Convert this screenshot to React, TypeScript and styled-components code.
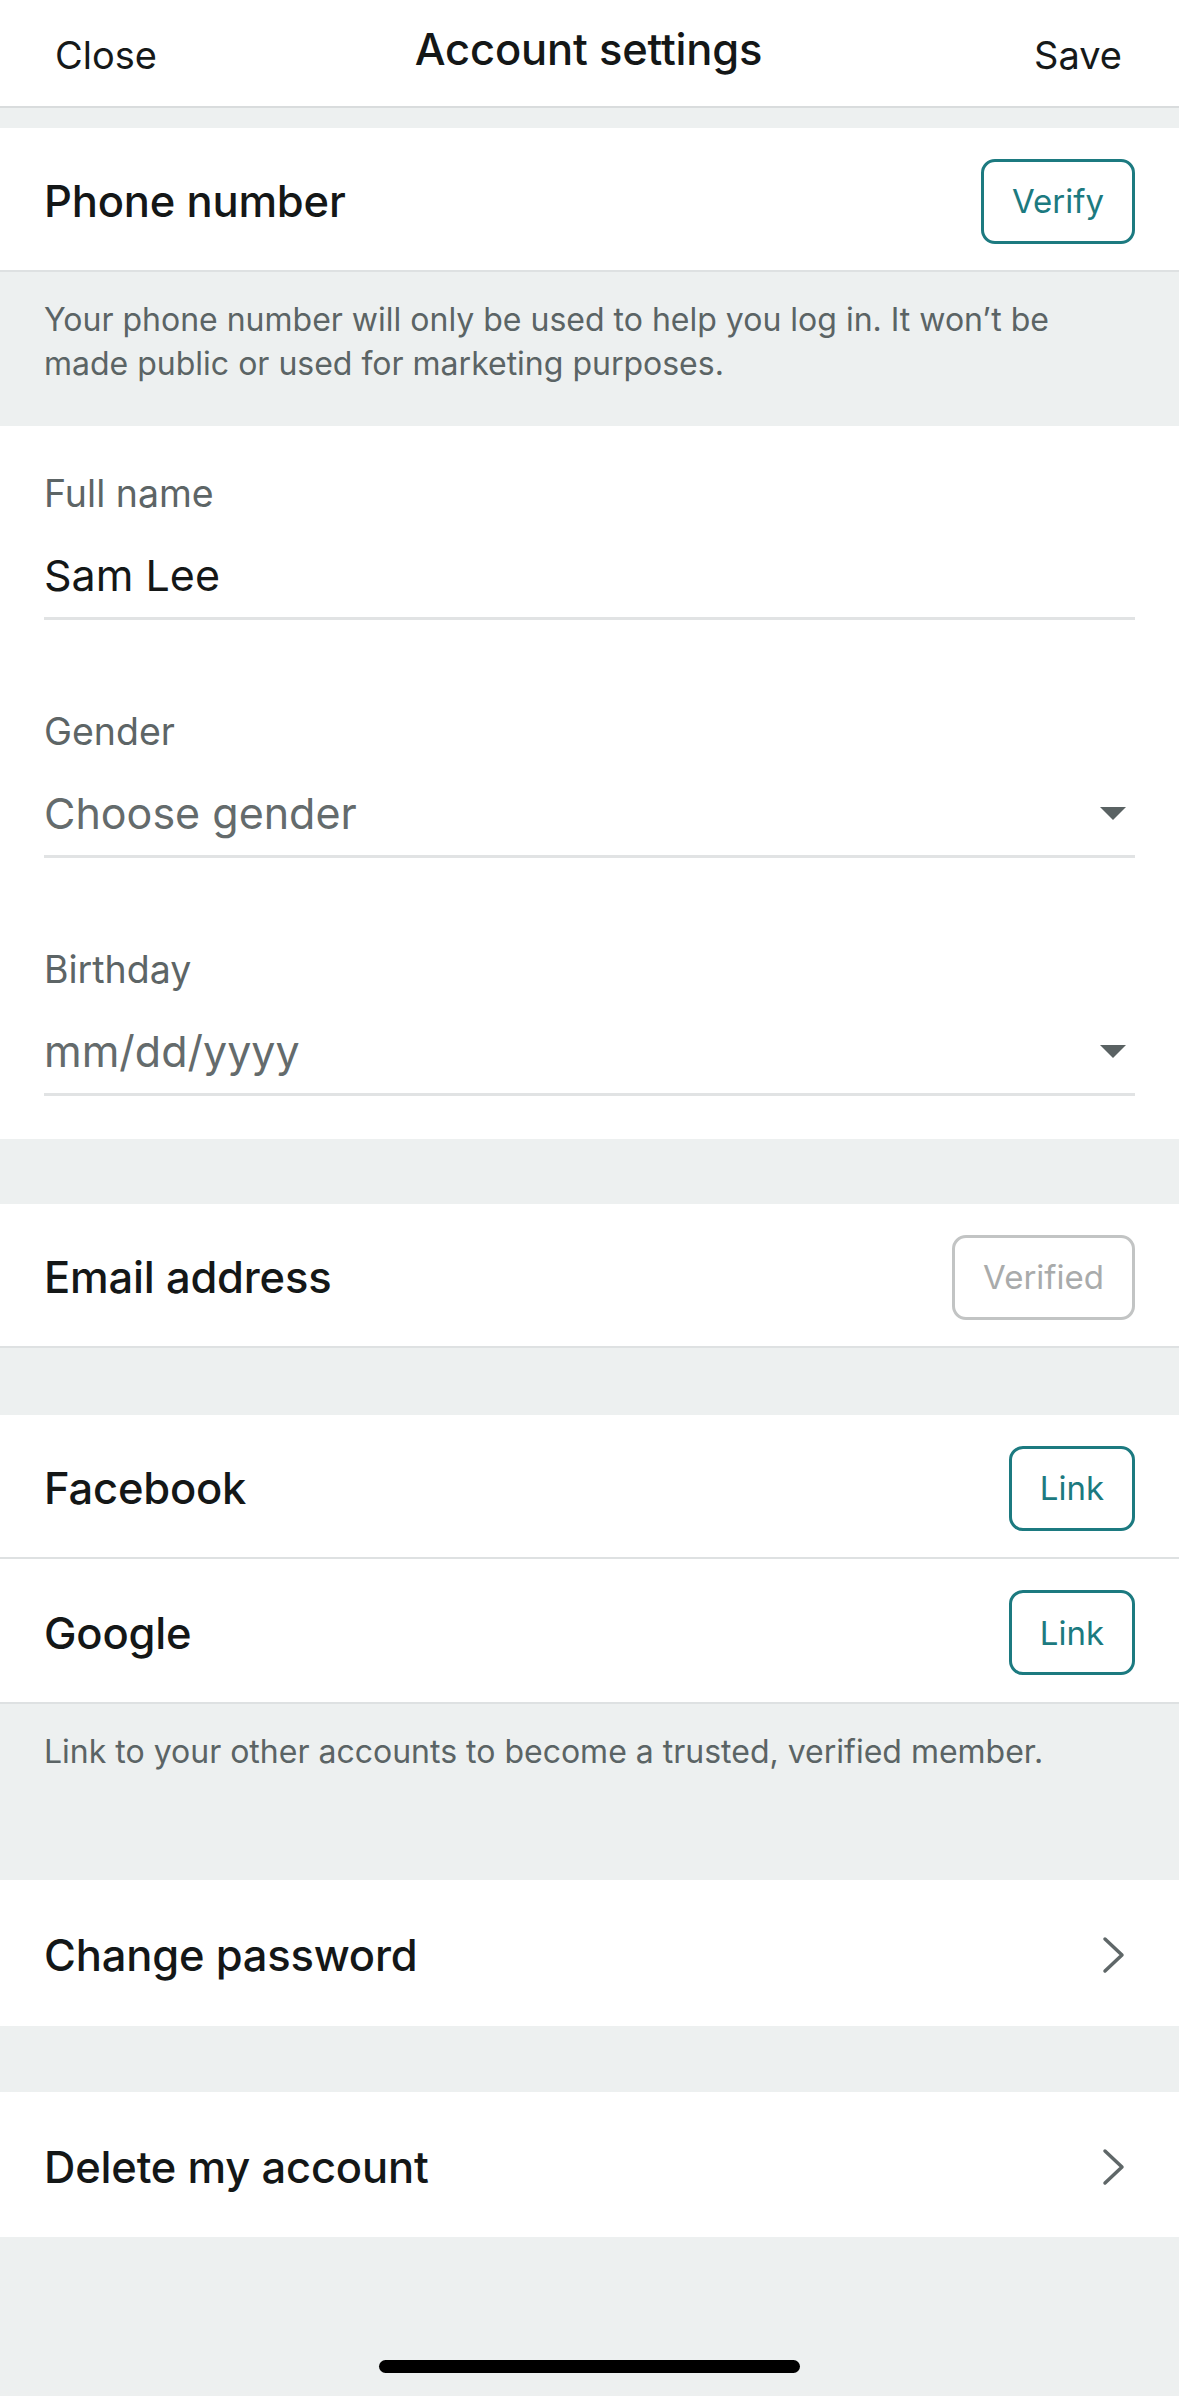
import React from "react";
import styled, { createGlobalStyle } from "styled-components";

const GlobalStyle = createGlobalStyle`
  *, *::before, *::after {
    box-sizing: border-box;
  }
  html, body {
    margin: 0;
    padding: 0;
    background: #edf0f0;
  }
  body {
    font-family: Inter, "Liberation Sans", sans-serif;
    color: #141717;
    -webkit-font-smoothing: antialiased;
  }
`;

const Page = styled.div`
  width: 1179px;
  min-height: 2396px;
  background: #edf0f0;
  display: flex;
  flex-direction: column;
`;

const Header = styled.header`
  height: 108px;
  background: #fff;
  border-bottom: 2px solid #d9dcdd;
  display: grid;
  grid-template-columns: 1fr auto 1fr;
  align-items: center;
  padding: 0 57px 0 55px;
`;

const HeaderAction = styled.span<{ $align?: "left" | "right" }>`
  font-size: 38px;
  color: #161919;
  justify-self: ${({ $align }) => ($align === "right" ? "end" : "start")};
  padding-top: 4px;
`;

const Title = styled.h1`
  margin: 0;
  font-size: 43.5px;
  font-weight: 500;
  letter-spacing: -0.2px;
  padding-bottom: 8px;
`;

const Gap = styled.div<{ $h: number }>`
  height: ${({ $h }) => $h}px;
`;

const Row = styled.div<{ $h?: number; $border?: boolean }>`
  height: ${({ $h }) => $h ?? 144}px;
  background: #fff;
  display: flex;
  align-items: center;
  justify-content: space-between;
  padding: 4px 44px 0;
  border-bottom: ${({ $border }) => ($border ? "2px solid #dee1e2" : "none")};
`;

const RowTitle = styled.span`
  font-size: 43.5px;
  font-weight: 500;
  letter-spacing: -0.2px;
`;

const PillButton = styled.button<{ $muted?: boolean }>`
  height: 85px;
  padding: 0 28px;
  border-radius: 14px;
  background: #fff;
  border: 3px solid ${({ $muted }) => ($muted ? "#c2c4c4" : "#1c7a80")};
  color: ${({ $muted }) => ($muted ? "#a9abab" : "#1c7a80")};
  font-family: inherit;
  font-size: 33px;
  font-weight: 400;
`;

const Note = styled.p<{ $bottom: number }>`
  margin: 0;
  padding: 26px 44px ${({ $bottom }) => $bottom}px;
  font-size: 32px;
  line-height: 44px;
  color: #5b6465;
`;

const FormSection = styled.section`
  background: #fff;
  padding: 48px 44px 43px;
  display: flex;
  flex-direction: column;
  gap: 92px;
`;

const Field = styled.div`
  border-bottom: 3px solid #e1e3e4;
  padding-bottom: 12px;
`;

const FieldLabel = styled.div`
  font-size: 37.5px;
  line-height: 40px;
  color: #5d6566;
`;

const FieldValue = styled.div<{ $placeholder?: boolean }>`
  margin-top: 31px;
  font-size: 43px;
  line-height: 60px;
  color: ${({ $placeholder }) => ($placeholder ? "#646b6c" : "#141717")};
  display: flex;
  align-items: center;
  justify-content: space-between;
`;

const Caret = () => (
  <svg width="28" height="15" viewBox="0 0 28 15" style={{ marginRight: 8 }}>
    <path d="M1 1 H27 L14 14 Z" fill="#5a6263" />
  </svg>
);

const Chevron = () => (
  <svg width="26" height="38" viewBox="0 0 26 38" style={{ marginRight: 8 }}>
    <path
      d="M4 3 L21 19 L4 35"
      fill="none"
      stroke="#5f6768"
      strokeWidth="3.5"
      strokeLinecap="round"
      strokeLinejoin="round"
    />
  </svg>
);

const Footer = styled.div`
  flex: 1;
  display: flex;
  justify-content: center;
  padding-top: 123px;
`;

const HomeBar = styled.div`
  width: 421px;
  height: 13px;
  border-radius: 7px;
  background: #000;
`;

export default function App() {
  return (
    <>
      <GlobalStyle />
      <Page>
        <Header>
          <HeaderAction>Close</HeaderAction>
          <Title>Account settings</Title>
          <HeaderAction $align="right">Save</HeaderAction>
        </Header>
        <Gap $h={20} />
        <Row $h={144} $border>
          <RowTitle>Phone number</RowTitle>
          <PillButton>Verify</PillButton>
        </Row>
        <Note $bottom={40}>
          Your phone number will only be used to help you log in. It won’t be
          <br />
          made public or used for marketing purposes.
        </Note>
        <FormSection>
          <Field>
            <FieldLabel>Full name</FieldLabel>
            <FieldValue>Sam Lee</FieldValue>
          </Field>
          <Field>
            <FieldLabel>Gender</FieldLabel>
            <FieldValue $placeholder>
              Choose gender
              <Caret />
            </FieldValue>
          </Field>
          <Field>
            <FieldLabel>Birthday</FieldLabel>
            <FieldValue $placeholder>
              mm/dd/yyyy
              <Caret />
            </FieldValue>
          </Field>
        </FormSection>
        <Gap $h={65} />
        <Row $h={144} $border>
          <RowTitle>Email address</RowTitle>
          <PillButton $muted>Verified</PillButton>
        </Row>
        <Gap $h={67} />
        <Row $h={144} $border>
          <RowTitle>Facebook</RowTitle>
          <PillButton>Link</PillButton>
        </Row>
        <Row $h={145} $border>
          <RowTitle>Google</RowTitle>
          <PillButton>Link</PillButton>
        </Row>
        <Note $bottom={106}>
          Link to your other accounts to become a trusted, verified member.
        </Note>
        <Row $h={146}>
          <RowTitle>Change password</RowTitle>
          <Chevron />
        </Row>
        <Gap $h={66} />
        <Row $h={145}>
          <RowTitle>Delete my account</RowTitle>
          <Chevron />
        </Row>
        <Footer>
          <HomeBar />
        </Footer>
      </Page>
    </>
  );
}
